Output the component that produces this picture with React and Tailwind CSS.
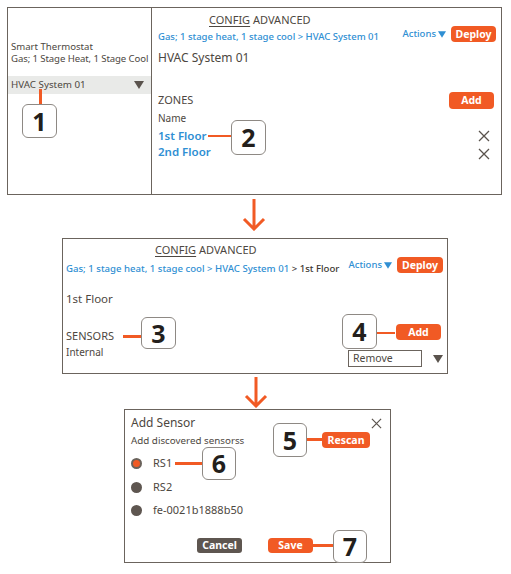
import React from "react";

const ORANGE = "bg-[#f15a24]";

function Callout({ n, cls }) {
  return (
    <div
      className={`absolute flex items-center justify-center rounded-[6px] border border-[#8e8984] bg-white text-[25px] font-bold leading-none text-[#231f1c] ${cls}`}
    >
      {n}
    </div>
  );
}

function Line({ cls }) {
  return <div className={`absolute ${ORANGE} ${cls}`} />;
}

function Tri({ cls }) {
  return (
    <svg viewBox="0 0 10 8" className={cls}>
      <path d="M0 0 L10 0 L5 8 Z" fill="currentColor" />
    </svg>
  );
}

function Arrow({ h }) {
  return (
    <svg width="24" height={h} viewBox={`0 0 24 ${h}`}>
      <path
        d={`M12 0 L12 ${h - 2} M2 ${h - 12} L12 ${h - 2} L22 ${h - 12}`}
        stroke="#f15a24"
        strokeWidth="3"
        fill="none"
      />
    </svg>
  );
}

function XIcon({ cls }) {
  return (
    <svg viewBox="0 0 12 12" className={cls}>
      <path d="M1 1 L11 11 M11 1 L1 11" stroke="currentColor" strokeWidth="1.3" fill="none" />
    </svg>
  );
}

function Btn({ children, cls }) {
  return (
    <div
      className={`flex items-center justify-center rounded-[4px] ${ORANGE} text-[10.5px] font-bold leading-none text-white ${cls}`}
    >
      {children}
    </div>
  );
}

export default function App() {
  return (
    <div
      className="relative h-[574px] w-[511px] overflow-hidden bg-white text-[#4d4741]"
      style={{ fontFamily: '"Noto Sans", "Open Sans", sans-serif' }}
    >
      {/* Box 1 */}
      <div className="ml-[7px] mt-[7px] flex h-[188px] w-[495px] border border-[#6b645d]">
        <div className="flex w-[144px] flex-col border-r border-[#6b645d] pt-[33px]">
          <div className="pl-[3px] text-[9.6px] leading-[12px] whitespace-nowrap">Smart Thermostat</div>
          <div className="pl-[3px] text-[9.6px] leading-[12px] whitespace-nowrap tracking-[-0.1px]">Gas; 1 Stage Heat, 1 Stage Cool</div>
          <div className="mt-[11px] flex h-[18px] items-center justify-between bg-[#e9eae8] pl-[3px] pr-[7px]">
            <span className="text-[9.8px] leading-none">HVAC System 01</span>
            <Tri cls="h-[8px] w-[10px] text-[#5a534d]" />
          </div>
        </div>
        <div className="flex flex-1 flex-col pl-[6px] pr-[5px] pt-[5px]">
          <div className="ml-[51px] text-[11px] leading-[14px]">
            <span className="underline underline-offset-2">CONFIG</span> ADVANCED
          </div>
          <div className="-mt-[1px] flex h-[16px] items-center justify-between">
            <span className="mt-[7px] text-[9.5px] font-medium text-[#2f8fd3] whitespace-nowrap">
              Gas; 1 stage heat, 1 stage cool &gt; HVAC System 01
            </span>
            <div className="flex items-center gap-[5px]">
              <span className="flex items-center gap-[2px] text-[9.5px] font-medium text-[#2f8fd3]">
                Actions <Tri cls="h-[7px] w-[8px]" />
              </span>
              <Btn cls="h-[16px] w-[45px]">Deploy</Btn>
            </div>
          </div>
          <div className="mt-[8px] text-[12px] leading-[16px]">HVAC System 01</div>
          <div className="mt-[26px] flex h-[17px] items-center justify-between pr-[2px]">
            <span className="text-[11px]">ZONES</span>
            <Btn cls="h-[17px] w-[45px]">Add</Btn>
          </div>
          <div className="mt-[3px] text-[10px] leading-[12px]">Name</div>
          <div className="mt-[4px] flex h-[15px] items-center justify-between pr-[6px]">
            <span className="text-[11.5px] font-semibold text-[#2f8fd3]">1st Floor</span>
            <XIcon cls="h-[12px] w-[12px] text-[#5a534d]" />
          </div>
          <div className="mt-[1px] flex h-[16px] items-center justify-between pr-[6px]">
            <span className="text-[11.5px] font-semibold text-[#2f8fd3]">2nd Floor</span>
            <XIcon cls="mt-[3px] h-[12px] w-[12px] text-[#5a534d]" />
          </div>
        </div>
      </div>

      {/* Arrow 1 */}
      <div className="ml-[242px] h-[43px] pt-[4px]">
        <Arrow h={32} />
      </div>

      {/* Box 2 */}
      <div className="ml-[62px] flex h-[136px] w-[386px] flex-col border border-[#6b645d] pl-[3px] pr-[4px] pt-[4px]">
        <div className="ml-[89px] text-[11px] leading-[14px]">
          <span className="underline underline-offset-2">CONFIG</span> ADVANCED
        </div>
        <div className="flex h-[16px] items-center justify-between">
          <span className="mt-[8px] text-[9.6px] font-medium whitespace-nowrap text-[#2f8fd3]">
            Gas; 1 stage heat, 1 stage cool &gt; HVAC System 01 <span className="text-[#3c3631]">&gt; 1st Floor</span>
          </span>
          <div className="flex items-center gap-[5px]">
            <span className="flex items-center gap-[2px] text-[9.5px] font-medium text-[#2f8fd3]">
              Actions <Tri cls="h-[7px] w-[8px]" />
            </span>
            <Btn cls="h-[16px] w-[46px]">Deploy</Btn>
          </div>
        </div>
        <div className="mt-[18px] text-[11.5px] leading-[16px]">1st Floor</div>
        <div className="mt-[17px] flex justify-between">
          <div className="flex flex-col">
            <span className="mt-[4px] text-[11px] leading-[16px]">SENSORS</span>
            <span className="mt-[2px] text-[10px] leading-[12px]">Internal</span>
          </div>
          <div className="flex flex-col items-end">
            <Btn cls="h-[16px] w-[45px] mr-[2px]">Add</Btn>
            <div className="mt-[10px] flex items-center">
              <div className="flex h-[17px] w-[74px] items-center border border-[#6b645d] pl-[4px] text-[10.5px]">Remove</div>
              <Tri cls="ml-[11px] h-[8px] w-[10px] text-[#5a534d]" />
            </div>
          </div>
        </div>
      </div>

      {/* Arrow 2 */}
      <div className="ml-[244px] h-[35px] pt-[3px]">
        <Arrow h={31} />
      </div>

      {/* Box 3 */}
      <div className="ml-[124px] flex h-[154px] w-[267px] flex-col border border-[#6b645d] pl-[6px] pr-[8px] pt-[5px]">
        <div className="flex items-center justify-between">
          <span className="text-[12px] leading-[16px]">Add Sensor</span>
          <XIcon cls="h-[11px] w-[11px] text-[#5a534d]" />
        </div>
        <div className="mt-[4px] text-[9.8px] leading-[12px]">Add discovered sensorss</div>
        <div className="mt-[8px] flex h-[16px] items-center gap-[11px]">
          <div className="h-[11px] w-[11px] rounded-full border-[2px] border-[#6a625b] bg-[#f15a24]" />
          <span className="text-[11px]">RS1</span>
        </div>
        <div className="mt-[8px] flex h-[16px] items-center gap-[11px]">
          <div className="h-[11px] w-[11px] rounded-full bg-[#5e5650]" />
          <span className="text-[11px]">RS2</span>
        </div>
        <div className="mt-[7px] flex h-[16px] items-center gap-[11px]">
          <div className="h-[11px] w-[11px] rounded-full bg-[#5e5650]" />
          <span className="text-[11px]">fe-0021b1888b50</span>
        </div>
        <div className="mt-[20px] flex gap-[26px] pl-[66px]">
          <div className="flex h-[15px] w-[45px] items-center justify-center rounded-[3px] bg-[#5e5650] text-[10.5px] font-bold leading-none text-white">
            Cancel
          </div>
          <Btn cls="h-[15px] w-[45px] rounded-[3px]">Save</Btn>
        </div>
      </div>

      {/* Callouts */}
      <Line cls="left-[39px] top-[89px] h-[15px] w-[3px]" />
      <Callout n="1" cls="left-[22px] top-[104px] h-[34px] w-[35px]" />

      <Line cls="left-[208px] top-[135px] h-[2px] w-[23px]" />
      <Callout n="2" cls="left-[231px] top-[120px] h-[35px] w-[35px]" />

      <Line cls="left-[123px] top-[335px] h-[3px] w-[18px]" />
      <Callout n="3" cls="left-[141px] top-[317px] h-[32px] w-[35px]" />

      <Line cls="left-[377px] top-[332px] h-[2px] w-[18px]" />
      <Callout n="4" cls="left-[342px] top-[314px] h-[35px] w-[35px]" />

      <Line cls="left-[307px] top-[438px] h-[3px] w-[15px]" />
      <Btn cls="absolute left-[322px] top-[432px] h-[16px] w-[48px] rounded-[3px]">Rescan</Btn>
      <Callout n="5" cls="left-[273px] top-[423px] h-[34px] w-[34px]" />

      <Line cls="left-[175px] top-[462px] h-[3px] w-[27px]" />
      <Callout n="6" cls="left-[202px] top-[447px] h-[33px] w-[34px]" />

      <Line cls="left-[313px] top-[544px] h-[3px] w-[20px]" />
      <Callout n="7" cls="left-[333px] top-[530px] h-[33px] w-[34px]" />
    </div>
  );
}
